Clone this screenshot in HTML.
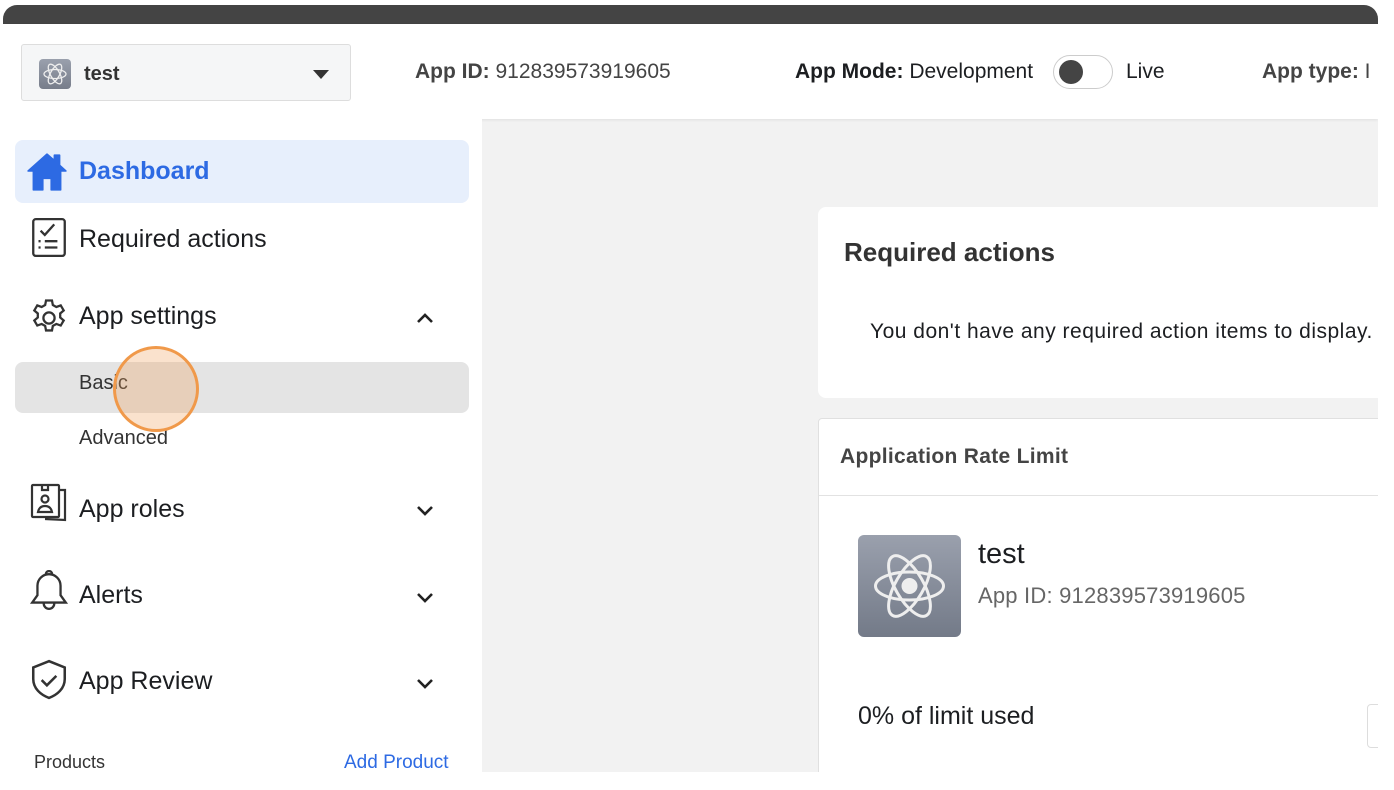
<!DOCTYPE html>
<html><head><meta charset="utf-8"><style>
*{margin:0;padding:0;box-sizing:border-box}
body{width:1394px;height:790px;background:#fff;font-family:"Liberation Sans",sans-serif;position:relative;overflow:hidden;color:#1c1e21}
.frame{position:absolute;left:3px;top:5px;width:1375px;height:767px;border-radius:14px 14px 0 0;overflow:hidden;background:#f2f2f2}
.bar{position:absolute;left:0;top:0;width:100%;height:19px;background:#444}
.hdr{position:absolute;left:0;top:19px;width:100%;height:95px;background:#fff;box-shadow:0 1px 3px rgba(0,0,0,.08)}
.side{position:absolute;left:0;top:114px;width:479px;height:660px;background:#fff}
.abs{position:absolute}
.sel{left:18px;top:20px;width:330px;height:57px;border:1px solid #ddd;border-radius:3px;background:#f5f6f7}
.t{font-size:21px;color:#444;white-space:nowrap}
.nav{font-size:25px;color:#1c1e21;white-space:nowrap}
.card{background:#fff;border-radius:8px;position:absolute}
</style></head><body>
<div class="frame">
<div class="bar"></div>
<div class="hdr">
 <div class="abs sel">
  <div class="abs" style="left:17px;top:14px;width:32px;height:30px;border-radius:4px;background:linear-gradient(#9aa0ad,#777d8a)">
   <svg width="32" height="30" viewBox="0 0 32 30"><g fill="none" stroke="#eee" stroke-width="1.3"><ellipse cx="16" cy="15" rx="11" ry="4.5"/><ellipse cx="16" cy="15" rx="11" ry="4.5" transform="rotate(60 16 15)"/><ellipse cx="16" cy="15" rx="11" ry="4.5" transform="rotate(-60 16 15)"/></g></svg>
  </div>
  <div class="abs" style="left:62px;top:18px;font-size:20px;font-weight:bold;color:#333">test</div>
  <div class="abs" style="left:291px;top:25px;width:0;height:0;border-left:8px solid transparent;border-right:8px solid transparent;border-top:9px solid #333"></div>
 </div>
 <div class="abs t" style="left:412px;top:36px"><b>App ID:</b> 912839573919605</div>
 <div class="abs t" style="left:792px;top:36px;color:#1c1e21"><b>App Mode:</b> Development</div>
 <div class="abs" style="left:1050px;top:31px;width:60px;height:34px;border:1px solid #ccc;border-radius:17px;background:#fff"><div class="abs" style="left:5px;top:4px;width:24px;height:24px;border-radius:50%;background:#444"></div></div>
 <div class="abs t" style="left:1123px;top:36px;color:#1c1e21">Live</div>
 <div class="abs t" style="left:1259px;top:36px"><b>App type:</b> I</div>
</div>
<div class="side">
 <div class="abs" style="left:12px;top:21px;width:454px;height:63px;background:#e7effc;border-radius:8px"></div>
 <svg class="abs" style="left:23px;top:33px" width="42" height="40" viewBox="0 0 40 38"><path d="M20 2 L2 18 L7 18 L7 36 L16 36 L16 25 L24 25 L24 36 L33 36 L33 18 L38 18 L32 12.5 L32 3 L27 3 L27 8 Z" fill="#2d6ae3" stroke="#2d6ae3" stroke-linejoin="round" stroke-width="1.5"/></svg>
 <div class="abs nav" style="left:76px;top:38px;color:#2d6ae3;font-weight:bold">Dashboard</div>
 <svg class="abs" style="left:27px;top:97px" width="38" height="42" viewBox="0 0 36 40" fill="none" stroke="#333" stroke-width="2.2"><rect x="3" y="3" width="30" height="35" rx="2.5"/><path d="M10 14l4 4 9-10M8 24h2M14 24h12M8 30h2M14 30h12"/></svg>
 <div class="abs nav" style="left:76px;top:106px">Required actions</div>
 <svg class="abs" style="left:25px;top:178px" width="42" height="42" viewBox="0 0 24 24" fill="none" stroke="#333" stroke-width="1.3"><circle cx="12" cy="12" r="3.2"/><path d="M10.3 2h3.4l.5 2.6 2 1.1 2.5-.9 1.7 2.9-2 1.7v2.3l2 1.7-1.7 2.9-2.5-.9-2 1.1-.5 2.6h-3.4l-.5-2.6-2-1.1-2.5.9-1.7-2.9 2-1.7V9.4l-2-1.7 1.7-2.9 2.5.9 2-1.1z"/></svg>
 <div class="abs nav" style="left:76px;top:183px">App settings</div>
 <svg class="abs" style="left:413px;top:193px" width="18" height="12" viewBox="0 0 18 12" fill="none" stroke="#222" stroke-width="2.6"><path d="M2 10l7-7 7 7"/></svg>
 <div class="abs" style="left:12px;top:243px;width:454px;height:51px;background:#e4e4e4;border-radius:8px"></div>
 <div class="abs" style="left:76px;top:253px;font-size:20px;color:#333">Basic</div>
 <div class="abs" style="left:76px;top:308px;font-size:20px;color:#333">Advanced</div>
 <svg class="abs" style="left:25px;top:363px" width="42" height="42" viewBox="0 0 40 42" fill="none" stroke="#333" stroke-width="2.2"><rect x="3" y="3" width="27" height="32" rx="1"/><path d="M30 8h6v30l-20-1"/><circle cx="16" cy="17" r="3.5"/><path d="M9 30c1-5 4-6 7-6s6 1 7 6zM13 4v4h6V4"/></svg>
 <div class="abs nav" style="left:76px;top:376px">App roles</div>
 <svg class="abs" style="left:413px;top:386px" width="18" height="12" viewBox="0 0 18 12" fill="none" stroke="#222" stroke-width="2.6"><path d="M2 2l7 7 7-7"/></svg>
 <svg class="abs" style="left:26px;top:451px" width="40" height="42" viewBox="0 0 38 40" fill="none" stroke="#333" stroke-width="2.2"><path d="M19 4a11 11 0 0 0-11 11v9l-5 7h32l-5-7v-9A11 11 0 0 0 19 4zM16 4a3 3 0 0 1 6 0M14 32a5 5 0 0 0 10 0"/></svg>
 <div class="abs nav" style="left:76px;top:462px">Alerts</div>
 <svg class="abs" style="left:413px;top:473px" width="18" height="12" viewBox="0 0 18 12" fill="none" stroke="#222" stroke-width="2.6"><path d="M2 2l7 7 7-7"/></svg>
 <svg class="abs" style="left:26px;top:539px" width="40" height="42" viewBox="0 0 38 40" fill="none" stroke="#333" stroke-width="2.4"><path d="M19 3L4 9v11c0 9 7 15 15 18 8-3 15-9 15-18V9z"/><path d="M12 21l5 5 9-9"/></svg>
 <div class="abs nav" style="left:76px;top:548px">App Review</div>
 <svg class="abs" style="left:413px;top:559px" width="18" height="12" viewBox="0 0 18 12" fill="none" stroke="#222" stroke-width="2.6"><path d="M2 2l7 7 7-7"/></svg>
 <div class="abs" style="left:31px;top:633px;font-size:18px;color:#333">Products</div>
 <div class="abs" style="left:341px;top:633px;font-size:19px;color:#2d6ae3">Add Product</div>
</div>
<div class="card" style="left:815px;top:202px;width:580px;height:191px">
 <div class="abs" style="left:26px;top:30px;font-size:26px;font-weight:bold;color:#333">Required actions</div>
 <div class="abs" style="left:52px;top:113px;font-size:21px;color:#1c1e21;white-space:nowrap;letter-spacing:0.5px">You don't have any required action items to display.</div>
</div>
<div class="card" style="left:815px;top:413px;width:580px;height:400px;border-radius:4px;border:1px solid #e0e0e0">
 <div class="abs" style="left:21px;top:26px;font-size:21px;font-weight:bold;color:#444;letter-spacing:0.3px">Application Rate Limit</div>
 <div class="abs" style="left:0;top:76px;width:100%;height:1px;background:#e2e2e2"></div>
 <div class="abs" style="left:39px;top:116px;width:103px;height:102px;border-radius:6px;background:linear-gradient(#9aa0ad,#737a88)">
  <svg width="103" height="102" viewBox="0 0 103 102"><g fill="none" stroke="#eee" stroke-width="3"><ellipse cx="51.5" cy="51" rx="34" ry="14"/><ellipse cx="51.5" cy="51" rx="34" ry="14" transform="rotate(60 51.5 51)"/><ellipse cx="51.5" cy="51" rx="34" ry="14" transform="rotate(-60 51.5 51)"/></g><circle cx="51.5" cy="51" r="8" fill="#eee"/></svg>
 </div>
 <div class="abs" style="left:159px;top:119px;font-size:29px;color:#1c1e21">test</div>
 <div class="abs" style="left:159px;top:164px;font-size:22px;color:#666;white-space:nowrap;letter-spacing:0.2px">App ID: 912839573919605</div>
 <div class="abs" style="left:39px;top:283px;font-size:25px;color:#1c1e21;white-space:nowrap">0% of limit used</div>
 <div class="abs" style="left:548px;top:285px;width:30px;height:44px;border:1px solid #ddd;border-radius:4px"></div>
</div>
</div>
<div class="abs" style="left:113px;top:346px;width:86px;height:86px;border-radius:50%;border:3px solid #f0994a;background:rgba(240,160,90,.3)"></div>
</body></html>
